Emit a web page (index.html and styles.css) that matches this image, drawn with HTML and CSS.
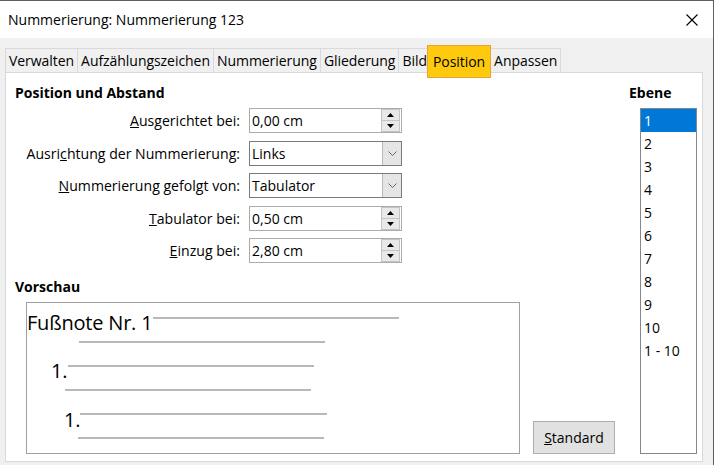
FILE: index.html
```html
<!DOCTYPE html>
<html lang="de">
<head>
  <meta charset="UTF-8" />
  <meta name="viewport" content="width=device-width, initial-scale=1.0"/>
  <title>Nummerierung: Nummerierung 123</title>
  <link rel="stylesheet" href="styles.css">
</head>
<body>

<div class="window">
  <div class="titlebar">
    <span class="title">Nummerierung: Nummerierung 123</span>
    <svg class="close" width="12" height="12" viewBox="0 0 12 12">
      <path d="M0.5 0.5L11.5 11.5M11.5 0.5L0.5 11.5" stroke="#000" stroke-width="1.1" fill="none"/>
    </svg>
  </div>

  <div class="dialog">
    <div class="tabs">
      <div class="tab">Verwalten</div>
      <div class="tab">Aufzählungszeichen</div>
      <div class="tab">Nummerierung</div>
      <div class="tab">Gliederung</div>
      <div class="tab">Bild</div>
      <div class="tab active">Position</div>
      <div class="tab">Anpassen</div>
    </div>

    <div class="panel">
      <div class="main">
        <div class="heading">Position und Abstand</div>

        <div class="form">
          <label class="label"><u>A</u>usgerichtet bei:</label>
          <div class="field">
            <span class="value">0,00 cm</span>
            <span class="spin">
              <span class="spin-btn"><svg width="7" height="4"><polygon points="0,4 3.5,0 7,4" fill="#000"/></svg></span>
              <span class="spin-btn"><svg width="7" height="4"><polygon points="0,0 7,0 3.5,4" fill="#000"/></svg></span>
            </span>
          </div>

          <label class="label">Ausri<u>c</u>htung der Nummerierung:</label>
          <div class="field combo">
            <span class="value">Links</span>
            <span class="drop"><svg width="9" height="5"><polyline points="0.5,0.5 4.5,4.5 8.5,0.5" stroke="#666" fill="none"/></svg></span>
          </div>

          <label class="label"><u>N</u>ummerierung gefolgt von:</label>
          <div class="field combo">
            <span class="value">Tabulator</span>
            <span class="drop"><svg width="9" height="5"><polyline points="0.5,0.5 4.5,4.5 8.5,0.5" stroke="#666" fill="none"/></svg></span>
          </div>

          <label class="label"><u>T</u>abulator bei:</label>
          <div class="field">
            <span class="value">0,50 cm</span>
            <span class="spin">
              <span class="spin-btn"><svg width="7" height="4"><polygon points="0,4 3.5,0 7,4" fill="#000"/></svg></span>
              <span class="spin-btn"><svg width="7" height="4"><polygon points="0,0 7,0 3.5,4" fill="#000"/></svg></span>
            </span>
          </div>

          <label class="label"><u>E</u>inzug bei:</label>
          <div class="field">
            <span class="value">2,80 cm</span>
            <span class="spin">
              <span class="spin-btn"><svg width="7" height="4"><polygon points="0,4 3.5,0 7,4" fill="#000"/></svg></span>
              <span class="spin-btn"><svg width="7" height="4"><polygon points="0,0 7,0 3.5,4" fill="#000"/></svg></span>
            </span>
          </div>
        </div>

        <div class="heading preview-title">Vorschau</div>

        <div class="preview-row">
          <div class="preview">
            <!-- sample of the numbered paragraphs with placeholder text lines -->
            <svg width="492" height="150" viewBox="0 0 492 150">
              <g stroke="#b8b8b8" stroke-width="2">
                <line x1="126" y1="15" x2="372" y2="15"/>
                <line x1="52" y1="39" x2="298" y2="39"/>
                <line x1="41" y1="63" x2="287" y2="63"/>
                <line x1="38" y1="87" x2="284" y2="87"/>
                <line x1="53" y1="111" x2="300" y2="111"/>
                <line x1="51" y1="135" x2="297" y2="135"/>
              </g>
              <text class="sample" x="0" y="27">Fußnote Nr. 1</text>
              <text class="sample" x="24" y="75">1.</text>
              <text class="sample" x="37" y="124">1.</text>
            </svg>
          </div>
          <button class="btn"><u>S</u>tandard</button>
        </div>
      </div>

      <div class="side">
        <div class="heading">Ebene</div>
        <ul class="levels">
          <li class="selected">1</li>
          <li>2</li>
          <li>3</li>
          <li>4</li>
          <li>5</li>
          <li>6</li>
          <li>7</li>
          <li>8</li>
          <li>9</li>
          <li>10</li>
          <li>1 - 10</li>
        </ul>
      </div>
    </div>
  </div>
</div>

</body>
</html>
```

FILE: styles.css
```css
* {
  box-sizing: border-box;
}

html, body {
  margin: 0;
}

body {
  font-family: "Open Sans", "Noto Sans", sans-serif;
  font-size: 14px;
  color: #000;
  background-color: #f0f0f0;
}

.window {
  width: 714px;
  height: 465px;
  border-top: 1px solid #5f5f5f;
  border-right: 1px solid #5f5f5f;
  background-color: #f0f0f0;
  overflow: hidden;
}

.titlebar {
  height: 37px;
  background-color: #fff;
  display: flex;
  align-items: center;
  justify-content: space-between;
  padding: 0 15px 0 8px;
}

.dialog {
  padding: 10px 10px 0 5px;
}

/* tab strip */
.tabs {
  display: flex;
  height: 24px;
  letter-spacing: -0.05px;
}

.tab {
  display: flex;
  align-items: center;
  padding: 0 3px;
  margin-right: -1px;
  border: 1px solid #d9d9d9;
  border-bottom: none;
  background-color: #f0f0f0;
  white-space: nowrap;
}

.tab.active {
  position: relative;
  z-index: 1;
  margin: -3px -1px -6px -3px;
  padding: 0 5px;
  background-color: #ffc90e;
  border: 1px solid #eba137;
}

.panel {
  display: flex;
  height: 390px;
  background-color: #fff;
  border: 1px solid #d9d9d9;
  padding: 10px 5px 7px 9px;
}

.main {
  flex: 1;
  display: flex;
  flex-direction: column;
}

.heading {
  font-weight: bold;
  line-height: 20px;
}

/* label / control rows */
.form {
  display: grid;
  grid-template-columns: 225px 153px;
  column-gap: 9px;
  row-gap: 7.5px;
  margin-top: 5px;
  align-items: center;
}

.label {
  text-align: right;
  white-space: nowrap;
  font-size: 14.1px;
}

.field {
  height: 25px;
  display: flex;
  align-items: center;
  border: 1px solid #ababab;
  background-color: #fff;
}

.field .value {
  flex: 1;
  padding-left: 2px;
}

.spin {
  align-self: stretch;
  width: 19px;
  margin: 0 1px 0 0;
  display: flex;
  flex-direction: column;
  border: 1px solid #c4c4c4;
  background-color: #e8e8e8;
}

.spin-btn {
  flex: 1;
  display: flex;
  align-items: center;
  justify-content: center;
}

.spin-btn + .spin-btn {
  border-top: 1px solid #c4c4c4;
}

.spin svg, .drop svg {
  display: block;
}

.combo {
  border-color: #7a7a7a;
}

.drop {
  align-self: stretch;
  width: 19px;
  display: flex;
  align-items: center;
  justify-content: center;
  background-color: #e5e5e5;
  border-left: 1px solid #b9b9b9;
}

.preview-title {
  margin-top: 14px;
}

.preview-row {
  display: flex;
  align-items: flex-end;
  height: 152px;
  margin-top: 5px;
  padding-left: 11px;
}

.preview {
  width: 494px;
  height: 152px;
  border: 1px solid #a0a0a0;
}

.preview svg {
  display: block;
}

.sample {
  font-family: "Open Sans", "Noto Sans", sans-serif;
  font-size: 20px;
  letter-spacing: -0.2px;
  fill: #000;
}

.btn {
  margin-left: 13px;
  width: 82px;
  height: 33px;
  padding: 0;
  font: inherit;
  color: #000;
  background-color: #e1e1e1;
  border: 1px solid #adadad;
}

/* level list */
.side {
  width: 68px;
  display: flex;
  flex-direction: column;
}

.levels {
  flex: 1;
  width: 57px;
  margin: 5px 0 0 11px;
  padding: 0;
  list-style: none;
  border: 1px solid #828790;
}

.levels li {
  height: 23px;
  line-height: 23px;
  padding-left: 3px;
}

.levels li.selected {
  background-color: #0078d7;
  color: #fff;
}
```
